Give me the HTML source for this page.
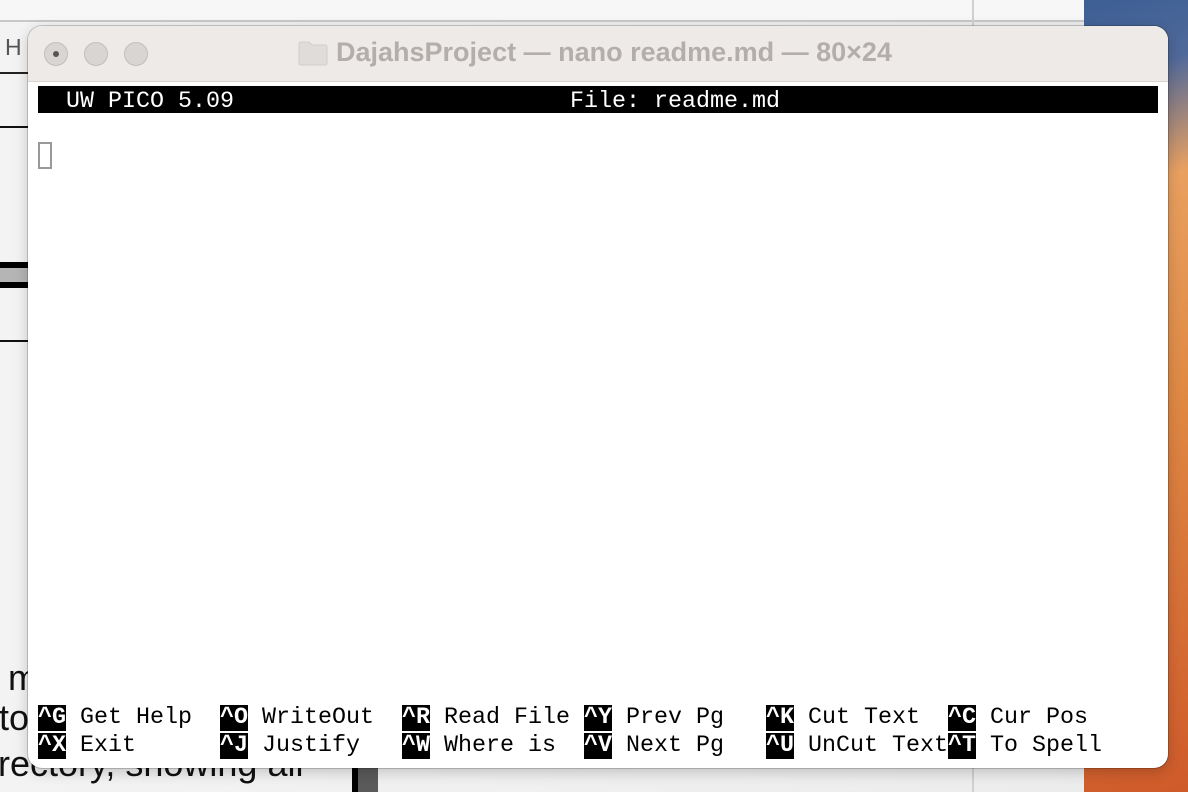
<!DOCTYPE html>
<html><head><meta charset="utf-8"><style>
*{margin:0;padding:0;box-sizing:border-box}
body{width:1188px;height:792px;overflow:hidden;position:relative;background:#f1f1f1;font-family:"Liberation Sans",sans-serif}
.abs{position:absolute}
.term{font-family:"Liberation Mono",monospace;font-size:23.33px;line-height:28px;white-space:pre;color:#000}
.k{background:#000;color:#fff;font-weight:bold}
</style></head><body>
<div class="abs" style="left:0;top:0;width:1084px;height:792px;background:linear-gradient(90deg,#f3f3f3,#ececec)"></div>
<div class="abs" style="left:0;top:0;width:1084px;height:22px;background:#f7f7f7;border-bottom:2px solid #c8c8c8"></div>
<div class="abs" style="left:972px;top:0;width:2px;height:792px;background:#d0d0d4"></div>
<div class="abs" style="left:1084px;top:0;width:104px;height:792px;background:linear-gradient(165deg,#3d5f94 0%,#50699a 10%,#e9a060 24%,#e08a45 50%,#cf5a2a 100%)"></div>
<div class="abs" style="left:5px;top:34px;font-size:23px;color:#555">H</div>
<div class="abs" style="left:0;top:72px;width:28px;height:2px;background:#222"></div>
<div class="abs" style="left:0;top:126px;width:28px;height:2px;background:#111"></div>
<div class="abs" style="left:0;top:262px;width:28px;height:6px;background:#000"></div>
<div class="abs" style="left:0;top:268px;width:28px;height:14px;background:#b5b5b5"></div>
<div class="abs" style="left:0;top:282px;width:28px;height:6px;background:#000"></div>
<div class="abs" style="left:0;top:340px;width:28px;height:2px;background:#111"></div>
<div class="abs" style="left:8px;top:658px;font-size:36px;line-height:40px;color:#111">m</div>
<div class="abs" style="left:-1px;top:698px;font-size:36px;line-height:40px;color:#111;white-space:nowrap">to</div>
<div class="abs" style="left:-2px;top:744px;font-size:36px;line-height:40px;color:#111;white-space:nowrap">rectory, showing all</div>
<div class="abs" style="left:352px;top:768px;width:6px;height:24px;background:#000"></div>
<div class="abs" style="left:358px;top:768px;width:20px;height:24px;background:#5a5a5a"></div>
<div class="abs" style="left:28px;top:26px;width:1140px;height:742px;background:#fff;border-radius:14px;box-shadow:0 0 0 1px rgba(0,0,0,.18),0 4px 14px rgba(0,0,0,.2);overflow:hidden">
  <div class="abs" style="left:0;top:0;width:1140px;height:56px;background:#eeeae7;border-bottom:1px solid #d8d4d1"></div>
  <div class="abs" style="left:16px;top:16px;width:24px;height:24px;border-radius:50%;background:#d9d5d2;border:1px solid #c2bebb"></div>
  <div class="abs" style="left:25px;top:25px;width:6px;height:6px;border-radius:50%;background:#555"></div>
  <div class="abs" style="left:56px;top:16px;width:24px;height:24px;border-radius:50%;background:#d9d5d2;border:1px solid #c2bebb"></div>
  <div class="abs" style="left:96px;top:16px;width:24px;height:24px;border-radius:50%;background:#d9d5d2;border:1px solid #c2bebb"></div>
  <svg class="abs" style="left:270px;top:14px" width="30" height="26" viewBox="0 0 30 26"><path d="M1 4 Q1 2 3 2 H11 L14 5 H27 Q29 5 29 7 V23 Q29 25 27 25 H3 Q1 25 1 23 Z" fill="#e0dcd9" stroke="#d2ceca"/></svg>
  <div class="abs" style="left:308px;top:11px;font-size:27px;font-weight:bold;color:#b3aeab;white-space:nowrap">DajahsProject — nano readme.md — 80×24</div>
  <div class="abs" style="left:10px;top:60px;width:1120px;height:27px;background:#000"></div>
  <div class="abs term" style="left:10px;top:62px;color:#fff">  UW PICO 5.09                        File: readme.md</div>
  <div class="abs" style="left:10px;top:116px;width:14px;height:27px;border:2px solid #999"></div>
  <div class="abs term" style="left:10px;top:678px"><span class="k">^G</span> Get Help  <span class="k">^O</span> WriteOut  <span class="k">^R</span> Read File <span class="k">^Y</span> Prev Pg   <span class="k">^K</span> Cut Text  <span class="k">^C</span> Cur Pos</div>
  <div class="abs term" style="left:10px;top:706px"><span class="k">^X</span> Exit      <span class="k">^J</span> Justify   <span class="k">^W</span> Where is  <span class="k">^V</span> Next Pg   <span class="k">^U</span> UnCut Text<span class="k">^T</span> To Spell</div>
</div>
</body></html>
